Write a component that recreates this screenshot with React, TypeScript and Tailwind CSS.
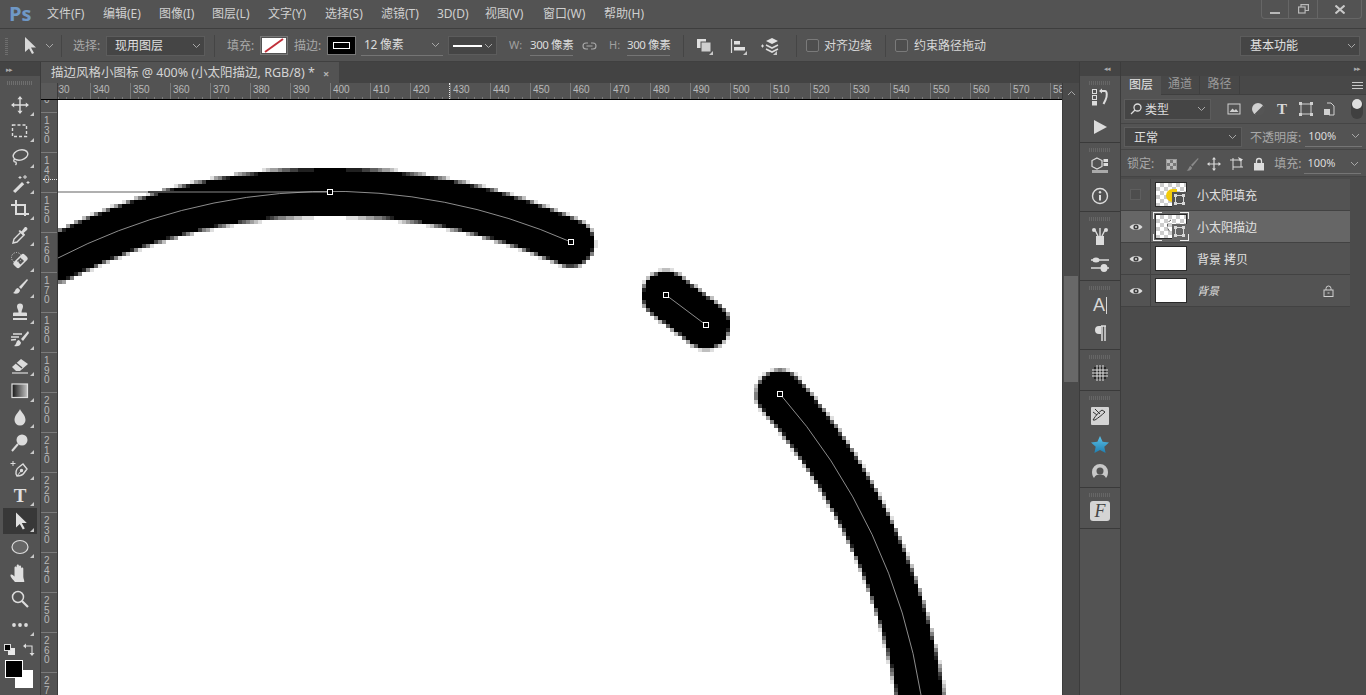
import React, { useMemo } from "react";

const FONT = "font-['Noto_Sans','Noto_Sans_CJK_SC',sans-serif]";

function Ic({ children, w = 20, h = 20, className = "" }: { children: React.ReactNode; w?: number; h?: number; className?: string }) {
  return (
    <svg width={w} height={h} viewBox={`0 0 ${w} ${h}`} fill="none" stroke="#dcdcdc" strokeWidth={1.4} className={"shrink-0 " + className}>
      {children}
    </svg>
  );
}

function Chev({ className = "" }: { className?: string }) {
  return (
    <svg width="9" height="6" viewBox="0 0 9 6" fill="none" stroke="#a8a8a8" strokeWidth={1} className={"shrink-0 " + className}>
      <path d="M1 1l3.5 3.5L8 1" />
    </svg>
  );
}

function Grip({ className = "" }: { className?: string }) {
  return <div className={"h-[4px] bg-[repeating-linear-gradient(90deg,#6e6e6e_0_1px,transparent_1px_2px)] " + className} />;
}

const tools: React.ReactNode[] = [
  <Ic key="move"><path d="M10 2v16M2 10h16" /><path d="M10 1l2.6 3.2H7.4zM10 19l2.6-3.2H7.4zM1 10l3.2-2.6v5.2zM19 10l-3.2-2.6v5.2z" fill="#dcdcdc" stroke="none" /></Ic>,
  <Ic key="marq"><rect x="2.5" y="4" width="14" height="11.5" strokeDasharray="3 2" /></Ic>,
  <Ic key="lasso"><ellipse cx="10.5" cy="8" rx="7.5" ry="5" transform="rotate(-15 10.5 8)" /><path d="M5 12c-2 1-1.5 3 .5 3 1 0 1 2 0 3" /></Ic>,
  <Ic key="wand"><path d="M3 18L12 9l2.2 2.2L5.2 20z" fill="#dcdcdc" stroke="none" /><path d="M15 2v4M13 4h4M18 8v3M16.5 9.5h3M10 3v3M8.5 4.5h3" strokeWidth={1} /></Ic>,
  <Ic key="crop"><path d="M1 6h14v11M6 1v14h13" strokeWidth={2} /></Ic>,
  <Ic key="drop"><path d="M3 18l1-4 7-7 3 3-7 7z" /><path d="M10 5l1.5 1.5 3-4c1.5-1.5 4 1 2.5 2.5l-3.5 3 1.5 1.5-1.5 1.5-5-5z" fill="#dcdcdc" stroke="none" /></Ic>,
  <Ic key="heal"><rect x="3" y="6" width="15" height="8" rx="2.5" transform="rotate(-45 10.5 10)" fill="#dcdcdc" stroke="none" /><rect x="8" y="7.5" width="5" height="5" transform="rotate(-45 10.5 10)" fill="#555" stroke="none" /><circle cx="6.5" cy="6.5" r="5" strokeDasharray="1 1.5" strokeWidth={1} /></Ic>,
  <Ic key="brush"><path d="M17 2L9 10l2 2 7-9z" fill="#dcdcdc" stroke="none" /><path d="M8 11c-3 0-2.5 4-5 5 3 1.5 7 .5 7-3z" fill="#dcdcdc" stroke="none" /></Ic>,
  <Ic key="stamp"><path d="M7 3.5a3 3 0 116 0c0 2.5-1.5 3-1.5 6H16a1 1 0 011 1V13H3v-2.5a1 1 0 011-1h4.5c0-3-1.5-3.5-1.5-6z" fill="#dcdcdc" stroke="none" /><path d="M3 16h14" strokeWidth={2} /></Ic>,
  <Ic key="hist"><path d="M18 2l-7 8 2 2 6-8z" fill="#dcdcdc" stroke="none" /><path d="M9 11c-3 0-2 4-5 6 4 1 7-.5 7-3.5z" fill="#dcdcdc" stroke="none" /><path d="M1 8h8M3 5h9M1 11l5-.5" strokeWidth={1.3} /></Ic>,
  <Ic key="eraser"><path d="M2 12l9-8 7 5-8 7H6z" fill="#dcdcdc" stroke="none" /><path d="M6 8l6 5" stroke="#555" /><path d="M2 18h16" strokeWidth={1.2} /></Ic>,
  <svg key="grad" width="18" height="16" viewBox="0 0 18 16" className="shrink-0"><defs><linearGradient id="g1" x1="0" x2="1"><stop offset="0" stopColor="#161616" /><stop offset="1" stopColor="#c4c4c4" /></linearGradient></defs><rect x="1" y="1" width="15.5" height="13.5" fill="url(#g1)" stroke="#e0e0e0" strokeWidth="1.2" /></svg>,
  <Ic key="burn"><path d="M10 2c1 3 5.5 6 5.5 11a5.5 5.5 0 01-11 0C4.500 8 9 5 10 2z" fill="#dcdcdc" stroke="none" /></Ic>,
  <Ic key="dodge"><circle cx="12" cy="7" r="5.500" fill="#dcdcdc" stroke="none" /><path d="M8 11l-6 7" strokeWidth={2} /></Ic>,
  <Ic key="pen"><path d="M7 17c-2-3-1-7 2-9l4-3 4 5-3 4c-2 3-4 3-7 3z" /><path d="M7 17l4-5" strokeWidth={1} /><circle cx="11.500" cy="11.500" r="1" fill="#dcdcdc" /><path d="M3 2v5M.5 4.500h5" strokeWidth={1} /></Ic>,
  <span key="T" className="font-['Liberation_Serif',serif] text-[19px] font-bold text-[#e0e0e0] leading-none">T</span>,
  <Ic key="arrow"><path d="M6 1.500v15l3.800-3.500 3 5.500 2-1-3-5.500h5z" fill="#e0e0e0" stroke="none" /></Ic>,
  <Ic key="ell"><ellipse cx="10" cy="10" rx="8" ry="6.500" fill="#666666" stroke="#dcdcdc" strokeWidth={1.2} /></Ic>,
  <Ic key="hand"><path d="M5 19c-1.500-2-5-5-4.500-7 .8-1 2.500 0 4 1.500V4.500c0-1.500 2.200-1.500 2.200 0V9V2.500c0-1.500 2.200-1.500 2.200 0V9V3.500c0-1.500 2.200-1.500 2.200 0V9V5.500c0-1.500 2.200-1.500 2.200 0v8c0 2 1 3.500 1 5.500z" fill="#e0e0e0" stroke="none" /></Ic>,
  <Ic key="zoom"><circle cx="8" cy="8" r="5.500" strokeWidth={1.5} /><path d="M12 12l6 6" strokeWidth={2.200} /></Ic>,
  <Ic key="dots"><circle cx="4" cy="10" r="1.900" fill="#dcdcdc" stroke="none" /><circle cx="10" cy="10" r="1.900" fill="#dcdcdc" stroke="none" /><circle cx="16" cy="10" r="1.900" fill="#dcdcdc" stroke="none" /></Ic>,
];

function Tri() {
  return <div className="absolute right-[3px] bottom-[2px] w-0 h-0 border-l-[4px] border-l-transparent border-b-[4px] border-b-[#c8c8c8]" />;
}

function LeftBar() {
  return (
    <div className="w-[41px] shrink-0 flex flex-col bg-[#535353] border-r border-[#3c3c3c]">
      <div className="h-[14px] bg-[#444444] flex items-center pl-[6px] text-[#aaa] text-[7px] leading-none tracking-[-1px]">▸▸</div>
      <Grip className="w-[26px] mx-auto mt-[5px]" />
      <div className="mt-[7px] flex flex-col">
        {tools.map((t, i) => (
          <div key={i} className={"h-[26px] flex items-center justify-center relative mx-[3px] " + (i === 16 ? "bg-[#383838]" : "")}>
            {t}
            {i !== 18 && i !== 19 && <Tri />}
          </div>
        ))}
      </div>
      <div className="flex items-center gap-[8px] pl-[4px] mt-[5px]">
        <div className="relative w-[11px] h-[11px]">
          <div className="absolute right-0 bottom-0 w-[7px] h-[7px] bg-[#e8e8e8]" />
          <div className="absolute left-0 top-0 w-[7px] h-[7px] bg-black border border-[#ddd]" />
        </div>
        <Ic w={12} h={13}><path d="M1 3h8v7" strokeWidth={1.100} /><path d="M0 3l3-2.500v5zM9 13l-2.500-3h5z" fill="#dcdcdc" stroke="none" /></Ic>
      </div>
      <div className="relative h-[30px] mt-[4px]">
        <div className="absolute left-[15px] top-[10px] w-[18px] h-[18px] bg-white" />
        <div className="absolute left-[5px] top-0 w-[18px] h-[18px] bg-black border border-white" />
      </div>
    </div>
  );
}

function hashCells() {
  const cy = 785;
  const arcs = [
    { cx: 330, R: 593, a0: Math.atan2(258 - cy, -272), a1: Math.atan2(242 - cy, 241) },
    { cx: 334, R: 593, a0: Math.atan2(394 - cy, 446), a1: Math.atan2(760 - cy, 592) },
  ];
  const segD = (px: number, py: number, ax: number, ay: number, bx: number, by: number) => {
    const dx = bx - ax, dy = by - ay;
    const t = Math.max(0, Math.min(1, ((px - ax) * dx + (py - ay) * dy) / (dx * dx + dy * dy)));
    return Math.hypot(px - ax - t * dx, py - ay - t * dy);
  };
  const dist = (x: number, y: number) => {
    let d = segD(x, y, 666, 295, 706, 325);
    for (const A of arcs) {
      const th = Math.atan2(y - cy, x - A.cx);
      const r = Math.hypot(x - A.cx, y - cy);
      if (th >= A.a0 && th <= A.a1) d = Math.min(d, Math.abs(r - A.R));
      else {
        const e0 = Math.hypot(x - A.cx - A.R * Math.cos(A.a0), y - cy - A.R * Math.sin(A.a0));
        const e1 = Math.hypot(x - A.cx - A.R * Math.cos(A.a1), y - cy - A.R * Math.sin(A.a1));
        d = Math.min(d, e0, e1);
      }
    }
    return d;
  };
  const levels: string[] = Array.from({ length: 9 }, () => "");
  for (let j = 0; j < 150; j++) {
    for (let i = -2; i < 252; i++) {
      const x = 58 + i * 4, y = 100 + j * 4;
      const d = dist(x + 2, y + 2);
      const a = Math.max(0, Math.min(1, (24 - d) / 4 + 0.5));
      const l = Math.round(a * 8);
      if (l > 0) levels[l] += `M${x} ${y}h4v4h-4z`;
    }
  }
  return levels;
}

function Art() {
  const levels = useMemo(hashCells, []);
  const anchors: [number, number][] = [[330, 192], [571, 242], [666, 295], [706, 325], [780, 394]];
  return (
    <svg width="1004" height="595" viewBox="58 100 1004 595" className="block">
      {levels.map((d, i) => (d ? <path key={i} d={d} fill="#000" fillOpacity={i / 8} /> : null))}
      <path d="M58 192H148" stroke="#b0b0b0" strokeWidth="2" />
      <path d="M148 192H330" stroke="#444" strokeWidth="2" />
      <path d="M58 258A593 593 0 0 1 571 242" fill="none" stroke="#b0b0b0" strokeWidth="0.8" />
      <path d="M666 295L706 325" fill="none" stroke="#b0b0b0" strokeWidth="0.8" />
      <path d="M780 394A593 593 0 0 1 921 695" fill="none" stroke="#b0b0b0" strokeWidth="0.8" />
      {anchors.map(([x, y]) => (
        <rect key={x} x={x - 2.5} y={y - 2.5} width="5" height="5" fill="#000" stroke="#fff" strokeWidth="1" shapeRendering="crispEdges" />
      ))}
    </svg>
  );
}

function HRuler() {
  const vals = Array.from({ length: 26 }, (_, i) => 330 + i * 10);
  return (
    <div className="h-[16px] flex bg-[#535353] relative">
      <div className="w-[17px] shrink-0 bg-[#5a5a5a] z-10 border-r border-[#3c3c3c]" />
      <div className="w-[1004px] overflow-hidden flex">
        <div className="flex ml-[-8px]">
          {vals.map((v) => (
            <div key={v} className="w-[40px] shrink-0 border-l border-[#7a7a7a] relative h-[16px]">
              <span className="absolute left-[2px] top-[1px] text-[10px] leading-[12px] text-[#b8b8b8] font-['Liberation_Sans',sans-serif]">{v}</span>
              <div className="absolute bottom-0 left-0 flex">
                {[0, 1, 2, 3, 4].map((k) => <div key={k} className="w-[8px] h-[2px] border-r border-[#7a7a7a]" />)}
              </div>
            </div>
          ))}
        </div>
      </div>
      <div className="absolute left-[408px] top-0 h-full border-l border-dotted border-[#e8e8e8]" />
    </div>
  );
}

function VRuler() {
  const vals = Array.from({ length: 16 }, (_, i) => 120 + i * 10);
  return (
    <div className="w-[17px] shrink-0 bg-[#535353] overflow-hidden relative border-r border-[#3c3c3c]">
      <div className="mt-[-28px] flex flex-col">
        {vals.map((v) => (
          <div key={v} className="h-[40px] shrink-0 border-t border-[#7a7a7a] relative">
            <div className="absolute left-[3px] top-[3px] flex flex-col text-[10px] leading-[9.7px] text-[#b8b8b8] font-['Liberation_Sans',sans-serif]">
              {String(v).split("").map((c, i) => <span key={i}>{c}</span>)}
            </div>
          </div>
        ))}
      </div>
      <div className="absolute left-[2px] top-[79px] w-full border-t border-dotted border-[#e8e8e8]" />
    </div>
  );
}

function Doc() {
  return (
    <div className="w-[1038px] shrink-0 flex flex-col">
      <div className="h-[21px] bg-[#434343] flex shrink-0">
        <div className="w-[298px] bg-[#535353] flex items-center pl-[10px] pt-[2px] text-[12.5px] text-[#d4d4d4] whitespace-nowrap">
          描边风格小图标 @ 400% (小太阳描边, RGB/8) *
          <span className="ml-[8px] text-[#b0b0b0] text-[11px] font-bold leading-none">×</span>
        </div>
      </div>
      <div className="flex-1 min-h-0 flex">
        <div className="w-[1021px] shrink-0 flex flex-col">
          <HRuler />
          <div className="h-[1px] bg-black shrink-0" />
          <div className="flex-1 min-h-0 flex">
            <VRuler />
            <div className="flex-1 bg-white overflow-hidden"><Art /></div>
          </div>
        </div>
        <div className="flex-1 bg-[#4a4a4a] border-l border-[#3c3c3c] flex flex-col">
          <div className="h-[19px] flex items-center justify-center">
            <svg width="9" height="6" viewBox="0 0 9 6" fill="none" stroke="#a8a8a8"><path d="M1 5l3.500-3.500L8 5" /></svg>
          </div>
          <div className="mx-[1px] mt-[174px] h-[106px] bg-[#686868]" />
        </div>
      </div>
    </div>
  );
}

function DockGroup({ children, className = "" }: { children: React.ReactNode; className?: string }) {
  return (
    <div className={"border-b border-[#3a3a3a] flex flex-col items-center shrink-0 relative " + className}>
      <Grip className="w-[22px] mt-[5px] opacity-70" />
      {children}
    </div>
  );
}

function Dock() {
  return (
    <div className="w-[42px] shrink-0 bg-[#535353] border-x border-[#3c3c3c] flex flex-col">
      <div className="h-[14px] bg-[#444444] shrink-0 flex items-center justify-center pl-[14px] text-[7px] text-[#aaa] tracking-[-1px]">◂◂</div>
      <DockGroup className="h-[67px]">
        <div className="h-[24px] flex items-center justify-center">
          <Ic w={18} h={18}>
            <rect x="1.500" y="1.500" width="4" height="4" strokeWidth={1} /><rect x="1.500" y="7.500" width="4" height="4" strokeWidth={1} /><rect x="1" y="13" width="5" height="4.500" fill="#dcdcdc" stroke="none" />
            <path d="M9 3h5c2 0 2.500 5 .5 9l-2 4" strokeWidth={2} /><path d="M8 3l3-2.500v5z" fill="#dcdcdc" stroke="none" />
          </Ic>
        </div>
        <div className="mt-[8px] h-[20px] flex items-center"><Ic w={16} h={16}><path d="M2 1l13 7-13 7z" fill="#dcdcdc" stroke="none" /></Ic></div>
      </DockGroup>
      <DockGroup className="h-[69px]">
        <div className="mt-[1px] h-[24px] flex items-center"><Ic w={18} h={18}><path d="M6 2l5 2.500v6L6 13l-5-2.500v-6z" strokeWidth={1.200} /><path d="M12.500 3h4.500v3h-4.500zM12.500 7h4.500v3h-4.500z" fill="#dcdcdc" stroke="none" /><path d="M1 14h16v3H1z" fill="#aaa" stroke="none" /></Ic></div>
        <div className="mt-[8px] h-[22px] flex items-center"><Ic w={18} h={18}><circle cx="9" cy="9" r="7.500" /><path d="M9 8v5.500" strokeWidth={2} /><circle cx="9" cy="5.200" r="1.200" fill="#dcdcdc" stroke="none" /></Ic></div>
      </DockGroup>
      <DockGroup className="h-[69px]">
        <div className="mt-[4px] h-[22px] flex items-center"><Ic w={18} h={18}><path d="M5 9h8v9H5z" fill="#dcdcdc" stroke="none" /><path d="M7 9L4 3M9 9V1M11 9l3-6" strokeWidth={1.400} /><circle cx="3" cy="3" r="2" fill="#dcdcdc" stroke="none" /><circle cx="15" cy="3" r="2" fill="#dcdcdc" stroke="none" /></Ic></div>
        <div className="mt-[6px] h-[22px] flex items-center"><Ic w={20} h={18}><path d="M1 5h18M1 13h18" strokeWidth={1.600} /><ellipse cx="6" cy="5" rx="3.500" ry="2.500" fill="#dcdcdc" stroke="none" /><ellipse cx="14" cy="13" rx="3.500" ry="4" fill="#dcdcdc" stroke="none" /></Ic></div>
      </DockGroup>
      <DockGroup className="h-[69px]">
        <div className="mt-[3px] h-[24px] flex items-center text-[#d8d8d8] text-[18px] leading-none font-['Liberation_Sans',sans-serif]">A<span className="w-[1px] h-[17px] bg-[#d8d8d8] ml-[1px]" /></div>
        <div className="mt-[6px] h-[20px] flex items-center"><Ic w={14} h={17}><path d="M9 1H6a4 4 0 000 8h2V1z" fill="#dcdcdc" stroke="none" /><path d="M9 1v15M12 1v15M8 1h5" strokeWidth={1.500} /></Ic></div>
      </DockGroup>
      <DockGroup className="h-[41px]">
        <div className="mt-[3px] h-[22px] flex items-center"><Ic w={20} h={20}><path d="M4 4h12v12H4z" fill="#222" stroke="none" /><path d="M2 7h16M2 10h16M2 13h16M7 2v16M10 2v16M13 2v16" stroke="#e4e4e4" strokeWidth={1} /></Ic></div>
      </DockGroup>
      <DockGroup className="h-[97px]">
        <div className="mt-[4px] h-[24px] flex items-center"><Ic w={18} h={18}><rect x="0" y="0" width="18" height="18" rx="1" fill="#d4d4d4" stroke="none" /><path d="M2 13c3-5 5-7 9-10l3 2c-3 3-7 6-10 8zM4 2l5 5M2 5l4 3" stroke="#333" strokeWidth={1} /></Ic></div>
        <div className="mt-[4px] h-[24px] flex items-center">
          <svg width="18" height="17" viewBox="0 0 18 17" className="shrink-0"><defs><linearGradient id="st" x1="0" x2="0" y1="0" y2="1"><stop offset="0" stopColor="#5cc2ea" /><stop offset="1" stopColor="#1f7fb0" /></linearGradient></defs><path d="M9 0l2.600 5.800 6.400.7-4.700 4.300 1.300 6.200L9 14l-5.600 3 1.300-6.200L0 6.500l6.400-.7z" fill="url(#st)" /></svg>
        </div>
        <div className="mt-[4px] h-[24px] flex items-center"><Ic w={18} h={18}><path d="M9 1a8 8 0 018 8c0 3-1 5-2 6-1-2.500-3-3.500-6-3.500S4 12.500 3 15c-1-1-2-3-2-6a8 8 0 018-8z" fill="#c8c8c8" stroke="none" /><circle cx="9" cy="8" r="3.500" fill="#535353" stroke="none" /></Ic></div>
      </DockGroup>
      <DockGroup className="h-[41px]">
        <div className="mt-[4px] w-[20px] h-[20px] bg-[#d4d4d4] rounded-[3px] flex items-center justify-center text-[#444] italic font-['Liberation_Serif',serif] text-[18px] leading-none">F</div>
      </DockGroup>
    </div>
  );
}

const checker = "bg-[conic-gradient(#cdcdcd_25%,#fff_0_50%,#cdcdcd_0_75%,#fff_0)] bg-size-[8px_8px]";

function SmartBadge({ bg = "bg-[#535353]" }: { bg?: string }) {
  return (
    <div className={"absolute right-[-1px] bottom-[-1px] w-[15px] h-[15px] flex items-center justify-center " + bg}>
      <svg width="11" height="11" viewBox="0 0 11 11" fill="none" stroke="#d8d8d8" strokeWidth={1}><rect x="1.500" y="1.500" width="8" height="8" /><path d="M0 0h3v3H0zM8 0h3v3H8zM0 8h3v3H0zM8 8h3v3H8z" fill="#d8d8d8" stroke="none" /></svg>
    </div>
  );
}

function Eye() {
  return (
    <svg width="14" height="10" viewBox="0 0 14 10"><path d="M0.500 5C3 1 11 1 13.500 5 11 9 3 9 0.500 5z" fill="#dcdcdc" /><circle cx="7" cy="5" r="2.600" fill="#3f3f3f" /><circle cx="7" cy="5" r="1" fill="#dcdcdc" /></svg>
  );
}

function LayerRow({ name, vis, sel, thumb, lock, italic }: { name: string; vis: boolean; sel?: boolean; thumb: React.ReactNode; lock?: boolean; italic?: boolean }) {
  return (
    <div className={"h-[32px] flex items-center border-b border-[#424242] " + (sel ? "bg-[#666666]" : "bg-[#535353]")}>
      <div className="w-[30px] h-full shrink-0 flex items-center justify-center border-r border-[#424242]">
        {vis ? <Eye /> : <div className="w-[11px] h-[11px] border border-[#5e5e5e] bg-[#4d4d4d]" />}
      </div>
      <div className="ml-[4px] w-[32px] h-[25px] shrink-0 relative">{thumb}</div>
      <span className={"ml-[10px] pt-[2px] text-[#e0e0e0] whitespace-nowrap " + (italic ? "italic text-[11px]" : "text-[12px]")}>{name}</span>
      {lock && (
        <svg width="11" height="12" viewBox="0 0 11 12" fill="none" stroke="#cfcfcf" className="ml-auto mr-[16px]"><path d="M3 5V3.500a2.500 2.500 0 015 0V5" /><rect x="1" y="5" width="9" height="6.500" /><path d="M4.500 8h2" /></svg>
      )}
    </div>
  );
}

function Panel() {
  const pi = "#d0d0d0";
  return (
    <div className="flex-1 min-w-0 flex flex-col bg-[#535353] text-[12px]">
      <div className="h-[14px] bg-[#444444] shrink-0 flex items-center justify-end pr-[6px] text-[7px] text-[#aaa] tracking-[-1px]">▸▸</div>
      <div className="h-[19px] bg-[#484848] flex shrink-0 border-b border-[#3f3f3f]">
        <div className="w-[40px] h-[19px] bg-[#535353] flex items-center justify-center pb-[2px] text-[#e4e4e4]">图层</div>
        <div className="w-[39px] flex items-center justify-center pb-[2px] text-[#9a9a9a] border-r border-[#3f3f3f]">通道</div>
        <div className="w-[40px] flex items-center justify-center pb-[2px] text-[#9a9a9a] border-r border-[#3f3f3f]">路径</div>
        <div className="ml-auto mr-[3px] flex flex-col justify-center gap-[2px]">
          <div className="w-[11px] h-[1px] bg-[#c8c8c8]" /><div className="w-[11px] h-[1px] bg-[#c8c8c8]" /><div className="w-[11px] h-[1px] bg-[#c8c8c8]" />
        </div>
      </div>
      <div className="h-[29px] flex items-center pl-[3px] shrink-0 border-b border-[#454545]">
        <div className="w-[87px] h-[21px] bg-[#454545] border border-[#5c5c5c] flex items-center pl-[5px] pr-[4px] text-[#dcdcdc]">
          <svg width="12" height="12" viewBox="0 0 12 12" fill="none" stroke="#dcdcdc" strokeWidth={1.300}><circle cx="7.500" cy="4.500" r="3.500" /><path d="M5 7l-4 4" /></svg>
          <span className="ml-[3px] pt-[2px]">类型</span>
          <Chev className="ml-auto" />
        </div>
        <div className="ml-[16px] flex items-center gap-[10px]">
          <Ic w={14} h={12}><rect x="1" y="1" width="12" height="10" strokeWidth={1} stroke={pi} /><path d="M2.500 9l3-3.500 2 2 1.500-1.500 2.500 3z" fill={pi} stroke="none" /></Ic>
          <Ic w={14} h={14}><circle cx="7" cy="7" r="6" fill={pi} stroke="none" /><path d="M12 3.500A6 6 0 013.500 12z" fill="#555" stroke="none" /></Ic>
          <span className="w-[14px] font-['Liberation_Serif',serif] font-bold text-[15px] leading-none text-[#d8d8d8] text-center">T</span>
          <Ic w={14} h={14}><rect x="2" y="2" width="10" height="10" strokeWidth={1} stroke={pi} /><path d="M0 0h3v3H0zM11 0h3v3h-3zM0 11h3v3H0zM11 11h3v3h-3z" fill={pi} stroke="none" /></Ic>
          <Ic w={12} h={14}><path d="M4 1h4l3 3v9H6" strokeWidth={1} stroke={pi} /><rect x="1" y="7" width="6" height="6" fill={pi} stroke="none" /></Ic>
        </div>
        <div className="ml-[16px] w-[12px] h-[20px] rounded-full bg-[#404040] relative">
          <div className="absolute left-[1px] top-0 w-[10px] h-[10px] rounded-full bg-[#dedede]" />
        </div>
      </div>
      <div className="h-[26px] flex items-center pl-[3px] shrink-0 border-b border-[#454545]">
        <div className="w-[118px] h-[20px] bg-[#454545] border border-[#5c5c5c] flex items-center pl-[9px] pr-[4px] text-[#e0e0e0]">
          <span className="pt-[2px]">正常</span><Chev className="ml-auto" />
        </div>
        <span className="ml-[8px] pt-[2px] text-[#a8a8a8]">不透明度:</span>
        <div className="ml-[4px] w-[57px] h-[20px] flex items-center border-b border-[#757575] text-[#dcdcdc] text-[11px] pl-[3px]">100%<Chev className="ml-auto mr-[2px]" /></div>
      </div>
      <div className="h-[27px] flex items-center pl-[6px] pt-[2px] shrink-0 border-b border-[#454545]">
        <span className="text-[#a8a8a8]">锁定:</span>
        <div className="ml-[12px] w-[11px] h-[11px] bg-[conic-gradient(#777_25%,#bbb_0_50%,#777_0_75%,#bbb_0)] bg-size-[6px_6px] border border-[#999]" />
        <Ic w={14} h={14} className="ml-[8px]"><path d="M13 1L6 8l1.500 1.500L13.500 2z" fill="#8a8a8a" stroke="none" /><path d="M5.500 9c-2 .5-1 3-4 4.500 3 .5 5.500-.5 5.500-3z" fill="#8a8a8a" stroke="none" /></Ic>
        <Ic w={14} h={14} className="ml-[8px]"><path d="M7 1v12M1 7h12" strokeWidth={1.200} /><path d="M7 0l2 2.500H5zM7 14l2-2.500H5zM0 7l2.500-2v4zM14 7l-2.500-2v4z" fill="#dcdcdc" stroke="none" /></Ic>
        <Ic w={14} h={14} className="ml-[9px]"><path d="M3 1v12M0 3h12M11 3v7M3 10h10" strokeWidth={1} /><path d="M8 0l5 2.500-3 2z" fill="#dcdcdc" stroke="none" /></Ic>
        <Ic w={12} h={14} className="ml-[9px]"><path d="M3.500 6V4a2.500 2.500 0 015 0v2" strokeWidth={1.300} /><rect x="1" y="6" width="10" height="7.500" fill="#dcdcdc" stroke="none" /></Ic>
        <span className="ml-[9px] text-[#a8a8a8]">填充:</span>
        <div className="ml-[3px] w-[57px] h-[20px] flex items-center border-b border-[#757575] text-[#dcdcdc] text-[11px] pl-[3px]">100%<Chev className="ml-auto mr-[2px]" /></div>
      </div>
      <div className="flex-1 min-h-0 flex bg-[#4b4b4b]">
        <div className="w-[229px] shrink-0 flex flex-col pt-[2px]">
          <LayerRow name="小太阳填充" vis={false} thumb={
            <div className={"w-full h-full border border-[#2a2a2a] relative " + checker}>
              <div className="absolute left-[10px] top-[6px] w-[11px] h-[13px] rounded-l-full bg-[#f3cb0b]" />
              <SmartBadge />
            </div>} />
          <LayerRow name="小太阳描边" vis sel thumb={
            <div className={"w-full h-full border border-[#2a2a2a] relative " + checker}>
              <div className="absolute left-[-3px] top-[-3px] w-[9px] h-[7px] border-l border-t border-[#eeeeee]" />
              <div className="absolute right-[-3px] top-[-3px] w-[9px] h-[7px] border-r border-t border-[#eeeeee]" />
              <div className="absolute left-[-3px] bottom-[-3px] w-[9px] h-[7px] border-l border-b border-[#eeeeee]" />
              <div className="absolute right-[-3px] bottom-[-3px] w-[9px] h-[7px] border-r border-b border-[#eeeeee]" />
              <svg width="8" height="14" viewBox="0 0 8 14" fill="none" stroke="#222" strokeWidth={0.8} className="absolute left-[9px] top-[4px]"><path d="M6 1C2 3 1 8 5 13" strokeDasharray="3 2" /></svg>
              <SmartBadge bg="bg-[#666666]" />
            </div>} />
          <LayerRow name="背景 拷贝" vis thumb={<div className="w-full h-full bg-white border border-[#2a2a2a]" />} />
          <LayerRow name="背景" vis lock italic thumb={<div className="w-full h-full bg-white border border-[#2a2a2a]" />} />
        </div>
      </div>
    </div>
  );
}

function Options() {
  const Sep = ({ c }: { c: string }) => <div className={"w-[1px] h-[22px] bg-[#454545] shrink-0 " + c} />;
  return (
    <div className="h-[33px] shrink-0 bg-[#535353] flex items-center text-[12px] border-b border-[#404040] pt-[1px]">
      <div className="ml-[5px] w-[3px] h-[18px] bg-[repeating-linear-gradient(0deg,#6e6e6e_0_1px,transparent_1px_2px)]" />
      <Ic w={13} h={17} className="ml-[16px]"><path d="M1 0v15l4-3.500 3 5.500 2-1-3-5.500h5z" fill="#d8d8d8" stroke="none" /></Ic>
      <Chev className="ml-[8px]" />
      <Sep c="ml-[7px]" />
      <span className="ml-[11px] text-[#a8a8a8] w-[33px]">选择:</span>
      <div className="w-[99px] h-[20px] bg-[#454545] border border-[#5c5c5c] flex items-center pl-[8px] pr-[3px] text-[#e0e0e0]">现用图层<Chev className="ml-auto" /></div>
      <Sep c="ml-[9px]" />
      <span className="ml-[12px] text-[#a8a8a8] w-[33px]">填充:</span>
      <div className="w-[28px] h-[19px] border border-[#777] p-[1px] shrink-0">
        <div className="w-full h-full bg-white">
          <svg width="24" height="15" viewBox="0 0 24 15"><path d="M3 14L21 1" stroke="#c0303a" strokeWidth="2" /></svg>
        </div>
      </div>
      <span className="ml-[6px] text-[#a8a8a8] w-[33px]">描边:</span>
      <div className="w-[29px] h-[19px] border border-[#777] bg-black flex items-center justify-center shrink-0">
        <div className="w-[17px] h-[7px] border border-white" />
      </div>
      <div className="ml-[5px] w-[82px] h-[20px] border-b border-[#757575] flex items-center pl-[3px] pr-[3px] text-[#dcdcdc]"><span className="tracking-[-0.3px]">12 像素</span><Chev className="ml-auto" /></div>
      <div className="ml-[5px] w-[49px] h-[19px] bg-[#454545] border border-[#5c5c5c] flex items-center pl-[4px] pr-[3px] shrink-0">
        <div className="w-[29px] h-[2px] bg-white" /><Chev className="ml-auto" />
      </div>
      <span className="ml-[12px] text-[#a0a0a0] text-[11px] w-[21px]">W:</span>
      <div className="w-[43px] h-[20px] border-b border-[#757575] flex items-center text-[#dcdcdc] text-[11.5px] tracking-[-0.4px] whitespace-nowrap">300 像素</div>
      <Ic w={15} h={10} className="ml-[9px]"><path d="M6 2H4a3 3 0 000 6h2M9 2h2a3 3 0 010 6H9M4.500 5h6" stroke="#aaa" strokeWidth={1.100} /></Ic>
      <span className="ml-[12px] text-[#a0a0a0] text-[11px] w-[18px]">H:</span>
      <div className="w-[43px] h-[20px] border-b border-[#757575] flex items-center text-[#dcdcdc] text-[11.5px] tracking-[-0.4px] whitespace-nowrap">300 像素</div>
      <Sep c="ml-[13px]" />
      <div className="relative ml-[12px] w-[20px] h-[22px] flex items-center">
        <Ic w={16} h={16}><rect x="1" y="1" width="9" height="9" fill="#e0e0e0" stroke="none" /><rect x="5" y="4" width="10" height="10" fill="#cfcfcf" stroke="#535353" strokeWidth={1} /></Ic><Tri />
      </div>
      <div className="relative ml-[14px] w-[20px] h-[22px] flex items-center">
        <Ic w={16} h={16}><path d="M1.500 1v14" strokeWidth={1.200} /><rect x="4" y="3" width="6" height="3.500" fill="#e0e0e0" stroke="none" /><rect x="4" y="9" width="11" height="3.500" fill="#e0e0e0" stroke="none" /></Ic><Tri />
      </div>
      <div className="relative ml-[10px] w-[20px] h-[22px] flex items-center">
        <Ic w={20} h={18}><path d="M1 9h3M2.500 7.500v3" strokeWidth={1} /><path d="M12 1l6 3-6 3-6-3z" fill="#e0e0e0" stroke="none" /><path d="M6 8l6 3 6-3M6 12l6 3 6-3" strokeWidth={1.600} /></Ic><Tri />
      </div>
      <Sep c="ml-[16px]" />
      <div className="ml-[9px] w-[13px] h-[13px] border border-[#7a7a7a] rounded-[2px] bg-[#4e4e4e]" />
      <span className="ml-[5px] text-[#d8d8d8] w-[61px]">对齐边缘</span>
      <Sep c="" />
      <div className="ml-[9px] w-[13px] h-[13px] border border-[#7a7a7a] rounded-[2px] bg-[#4e4e4e]" />
      <span className="ml-[6px] text-[#d8d8d8]">约束路径拖动</span>
      <div className="ml-auto mr-[6px] w-[120px] h-[20px] bg-[#454545] border border-[#5c5c5c] flex items-center pl-[9px] pr-[3px] text-[#e0e0e0]">基本功能<Chev className="ml-auto" /></div>
    </div>
  );
}

const menu: [string, string][] = [
  ["文件(F)", "w-[56px]"], ["编辑(E)", "w-[56px]"], ["图像(I)", "w-[53px]"], ["图层(L)", "w-[56px]"],
  ["文字(Y)", "w-[57px]"], ["选择(S)", "w-[56px]"], ["滤镜(T)", "w-[56px]"], ["3D(D)", "w-[48px]"],
  ["视图(V)", "w-[58px]"], ["窗口(W)", "w-[61px]"], ["帮助(H)", "w-[56px]"],
];

function MenuBar() {
  return (
    <div className="h-[29px] shrink-0 bg-[#535353] flex border-b border-[#3e3e3e]">
      <span className="ml-[9px] w-[38px] h-[28px] font-['Open_Sans',sans-serif] font-bold text-[20px] leading-[27px] text-[#6f98c6]">Ps</span>
      <div className="flex items-center h-[28px] text-[12px] text-[#d0d0d0]">
        {menu.map(([t, w]) => <span key={t} className={"whitespace-nowrap " + w}>{t}</span>)}
      </div>
      <div className="ml-auto mr-[4px] h-[19px] w-[101px] border border-t-0 border-[#666] rounded-b-[4px] flex">
        <div className="w-[27px] border-r border-[#666] flex items-end justify-center pb-[4px]"><div className="w-[10px] h-[2px] bg-[#b8b8b8]" /></div>
        <div className="w-[29px] border-r border-[#666] flex items-center justify-center">
          <svg width="11" height="10" viewBox="0 0 11 10" fill="none" stroke="#b8b8b8" strokeWidth={1.200}><rect x="0.600" y="3" width="6.500" height="6" /><path d="M3 3V.600h7.400V6.500H7" /></svg>
        </div>
        <div className="flex-1 flex items-center justify-center">
          <svg width="10" height="9" viewBox="0 0 10 9" stroke="#c8c8c8" strokeWidth={2}><path d="M0.500 0.500l9 8M9.500 0.500l-9 8" /></svg>
        </div>
      </div>
    </div>
  );
}

export default function App() {
  return (
    <div className={"w-[1366px] h-[695px] overflow-hidden flex flex-col bg-[#535353] " + FONT}>
      <MenuBar />
      <Options />
      <div className="flex-1 min-h-0 flex">
        <LeftBar />
        <Doc />
        <Dock />
        <Panel />
      </div>
    </div>
  );
}
